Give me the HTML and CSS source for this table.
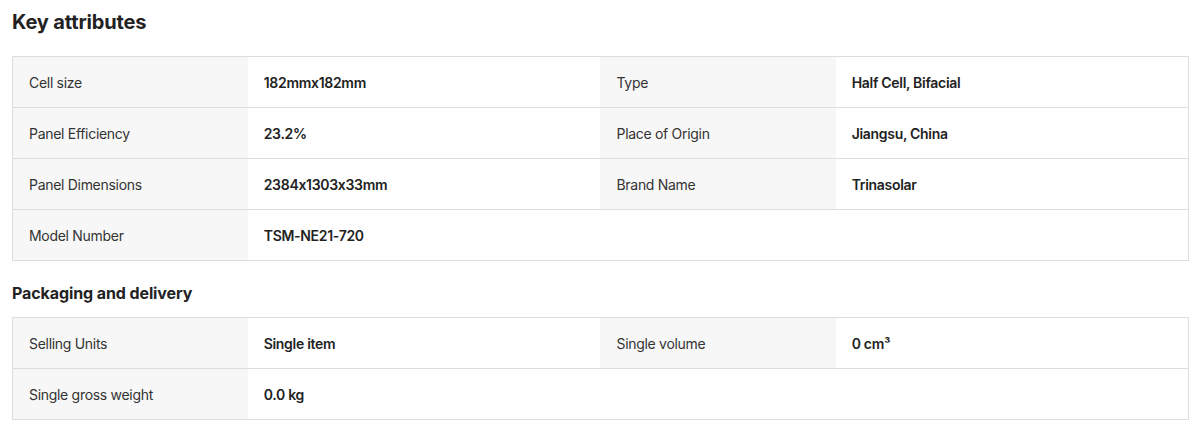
FILE: index.html
```html
<!DOCTYPE html>
<html>
<head>
<meta charset="utf-8">
<link rel="stylesheet" href="styles.css">
</head>
<body>
<div class="page">
  <h2 class="title">Key attributes</h2>
  <table class="attrs">
    <colgroup><col class="c-l"><col class="c-v"><col class="c-l"><col class="c-v"></colgroup>
    <tr><td class="lbl">Cell size</td><td class="val">182mmx182mm</td><td class="lbl">Type</td><td class="val">Half Cell, Bifacial</td></tr>
    <tr><td class="lbl">Panel Efficiency</td><td class="val">23.2%</td><td class="lbl">Place of Origin</td><td class="val">Jiangsu, China</td></tr>
    <tr><td class="lbl">Panel Dimensions</td><td class="val">2384x1303x33mm</td><td class="lbl">Brand Name</td><td class="val">Trinasolar</td></tr>
    <tr><td class="lbl">Model Number</td><td class="val">TSM-NE21-720</td><td></td><td></td></tr>
  </table>
  <h3 class="subtitle">Packaging and delivery</h3>
  <table class="attrs">
    <colgroup><col class="c-l"><col class="c-v"><col class="c-l"><col class="c-v"></colgroup>
    <tr><td class="lbl">Selling Units</td><td class="val">Single item</td><td class="lbl">Single volume</td><td class="val">0 cm³</td></tr>
    <tr><td class="lbl">Single gross weight</td><td class="val">0.0 kg</td><td></td><td></td></tr>
  </table>
</div>
</body>
</html>
```
FILE: styles.css
```css
html, body {
  margin: 0;
  padding: 0;
  background: #fff;
}
body {
  font-family: Inter, "Noto Sans", sans-serif;
  font-feature-settings: "calt" 0;
  color: #222;
}
.page {
  padding: 0 11px 0 12px;
}
.title {
  margin: 0;
  padding-top: 9px;
  font-size: 20px;
  line-height: 26px;
  font-weight: 700;
  letter-spacing: -0.15px;
  color: #222;
}
.subtitle {
  margin: 0;
  padding: 22px 0 14px;
  font-size: 16px;
  line-height: 20px;
  font-weight: 700;
  letter-spacing: -0.1px;
  color: #222;
}
.attrs {
  width: 100%;
  border-collapse: collapse;
  table-layout: fixed;
  border: 1px solid #ddd;
}
.title + .attrs {
  margin-top: 21px;
}
.c-l { width: 20%; }
.c-v { width: 30%; }
.attrs td {
  height: 51px;
  box-sizing: border-box;
  padding: 1px 16px 0;
  border-top: 1px solid #ddd;
  font-size: 14px;
  line-height: 18px;
  letter-spacing: -0.3px;
  vertical-align: middle;
}
.lbl {
  background: #f7f7f7;
  color: #333;
  font-weight: 400;
}
.val {
  color: #222;
  font-weight: 600;
}
```
